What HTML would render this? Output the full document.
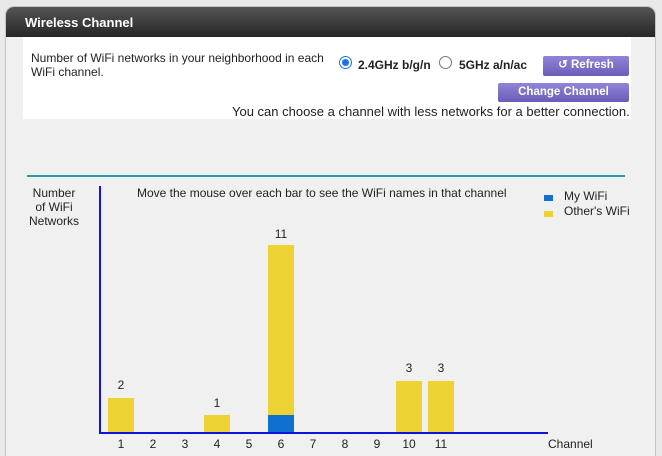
<!DOCTYPE html>
<html style="width:662px;height:456px;overflow:hidden"><head><meta charset="utf-8"><style>
*{margin:0;padding:0;box-sizing:border-box}
body{width:662px;height:456px;background:#e9e9e9;font-family:"Liberation Sans",Arial,sans-serif;position:relative;overflow:hidden;color:#222}
.panel{position:absolute;left:5px;top:6px;width:651px;height:452px;background:#f0f0f0;border:1px solid #c4c4c4;border-bottom:none;border-radius:9px 9px 0 0;overflow:hidden}
.hdr{height:30px;background:linear-gradient(#555,#262626);color:#fff;font-weight:bold;font-size:13px;padding:8px 0 0 19px}
.top{position:absolute;left:17px;top:30px;width:608px;height:82px;background:#fff}
.a{position:absolute;font-size:12.5px}
.btn{position:absolute;background:linear-gradient(#8f85d8,#6a5db8);color:#fff;font-weight:bold;font-size:11.5px;text-align:center;border-radius:2px}
.radio{position:absolute;width:13px;height:13px;border-radius:50%;border:1px solid #777;background:#fff}
.bar{position:absolute;background:#ecd232;width:26px}
.lbl{position:absolute;font-size:12px;width:32px;text-align:center}
</style></head><body>
<div class="panel">
<div class="hdr">Wireless Channel</div>
<div class="top"></div>
</div>
<div class="a" style="left:31px;top:51px;line-height:14px;font-size:12px">Number of WiFi networks in your neighborhood in each<br>WiFi channel.</div>
<div class="radio" style="left:339px;top:56px;border-color:#1a73e8"><div style="position:absolute;left:2px;top:2px;width:7px;height:7px;border-radius:50%;background:#1a73e8"></div></div>
<div class="a" style="left:358px;top:58px;font-weight:bold;font-size:12px">2.4GHz b/g/n</div>
<div class="radio" style="left:439px;top:56px"></div>
<div class="a" style="left:459px;top:58px;font-weight:bold;font-size:12px">5GHz a/n/ac</div>
<div class="btn" style="left:543px;top:56px;width:86px;height:20px;line-height:19px">&#8634; Refresh</div>
<div class="btn" style="left:498px;top:83px;width:131px;height:19px;line-height:19px">Change Channel</div>
<div class="a" style="left:232px;top:104px;font-size:13px">You can choose a channel with less networks for a better connection.</div>
<div style="position:absolute;left:27px;top:175px;width:598px;height:2px;background:#2a9cb0"></div>
<div class="a" style="left:24px;top:186px;width:60px;text-align:center;font-size:12px;line-height:14px">Number<br>of WiFi<br>Networks</div>
<div class="a" style="left:137px;top:186px;font-size:12px">Move the mouse over each bar to see the WiFi names in that channel</div>
<div style="position:absolute;left:544px;top:195px;width:9px;height:6px;background:#1070d0"></div>
<div class="a" style="left:564px;top:189px;font-size:12px">My WiFi</div>
<div style="position:absolute;left:544px;top:211px;width:9px;height:6px;background:#ecd232"></div>
<div class="a" style="left:564px;top:204px;font-size:12px">Other's WiFi</div>
<div style="position:absolute;left:99px;top:186px;width:2px;height:248px;background:#1010e0"></div>
<div style="position:absolute;left:99px;top:432px;width:449px;height:2px;background:#1010e0"></div>
<div class="bar" style="left:108px;top:398px;height:34px"></div>
<div class="bar" style="left:204px;top:415px;height:17px"></div>
<div class="bar" style="left:268px;top:245px;height:187px"></div>
<div style="position:absolute;left:268px;top:415px;width:26px;height:17px;background:#1070d0"></div>
<div class="bar" style="left:396px;top:381px;height:51px"></div>
<div class="bar" style="left:428px;top:381px;height:51px"></div>
<div class="lbl" style="left:105px;top:378px">2</div>
<div class="lbl" style="left:201px;top:396px">1</div>
<div class="lbl" style="left:265px;top:227px">11</div>
<div class="lbl" style="left:393px;top:361px">3</div>
<div class="lbl" style="left:425px;top:361px">3</div>
<div class="lbl" style="left:105px;top:437px">1</div>
<div class="lbl" style="left:137px;top:437px">2</div>
<div class="lbl" style="left:169px;top:437px">3</div>
<div class="lbl" style="left:201px;top:437px">4</div>
<div class="lbl" style="left:233px;top:437px">5</div>
<div class="lbl" style="left:265px;top:437px">6</div>
<div class="lbl" style="left:297px;top:437px">7</div>
<div class="lbl" style="left:329px;top:437px">8</div>
<div class="lbl" style="left:361px;top:437px">9</div>
<div class="lbl" style="left:393px;top:437px">10</div>
<div class="lbl" style="left:425px;top:437px">11</div>
<div class="a" style="left:548px;top:437px;font-size:12px">Channel</div>
</body></html>
